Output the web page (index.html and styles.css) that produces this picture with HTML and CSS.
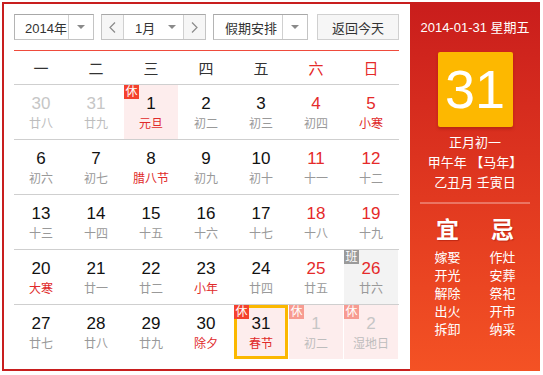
FILE: index.html
```html
<!DOCTYPE html>
<html lang="zh-CN">
<head>
<meta charset="utf-8">
<title>万年历</title>
<link rel="stylesheet" href="styles.css">
</head>
<body>
<div class="cal">
  <div class="main">
    <div class="toolbar">
      <div class="select year">
        <span class="sel-text">2014年</span>
        <span class="sel-arrow"><i class="tri"></i></span>
      </div>
      <div class="month-group">
        <span class="nav-btn"><svg width="7" height="11" viewBox="0 0 7 11"><polyline points="6,0.5 1,5.5 6,10.5" fill="none" stroke="#8a8a8a" stroke-width="1.2"/></svg></span>
        <span class="month"><span class="month-text">1月</span><i class="tri"></i></span>
        <span class="nav-btn"><svg width="7" height="11" viewBox="0 0 7 11"><polyline points="1,0.5 6,5.5 1,10.5" fill="none" stroke="#8a8a8a" stroke-width="1.2"/></svg></span>
      </div>
      <div class="select holiday">
        <span class="sel-text">假期安排</span>
        <span class="sel-arrow"><i class="tri"></i></span>
      </div>
      <div class="today-btn">返回今天</div>
    </div>

    <div class="weekdays">
      <span>一</span><span>二</span><span>三</span><span>四</span><span>五</span><span class="we">六</span><span class="we">日</span>
    </div>

    <div class="week">
      <div class="day other"><b>30</b><small>廿八</small></div>
      <div class="day other"><b>31</b><small>廿九</small></div>
      <div class="day rest"><em class="tag">休</em><b>1</b><small class="fest">元旦</small></div>
      <div class="day"><b>2</b><small>初二</small></div>
      <div class="day"><b>3</b><small>初三</small></div>
      <div class="day we"><b>4</b><small>初四</small></div>
      <div class="day we"><b>5</b><small class="fest">小寒</small></div>
    </div>
    <div class="week">
      <div class="day"><b>6</b><small>初六</small></div>
      <div class="day"><b>7</b><small>初七</small></div>
      <div class="day"><b>8</b><small class="fest">腊八节</small></div>
      <div class="day"><b>9</b><small>初九</small></div>
      <div class="day"><b>10</b><small>初十</small></div>
      <div class="day we"><b>11</b><small>十一</small></div>
      <div class="day we"><b>12</b><small>十二</small></div>
    </div>
    <div class="week">
      <div class="day"><b>13</b><small>十三</small></div>
      <div class="day"><b>14</b><small>十四</small></div>
      <div class="day"><b>15</b><small>十五</small></div>
      <div class="day"><b>16</b><small>十六</small></div>
      <div class="day"><b>17</b><small>十七</small></div>
      <div class="day we"><b>18</b><small>十八</small></div>
      <div class="day we"><b>19</b><small>十九</small></div>
    </div>
    <div class="week">
      <div class="day"><b>20</b><small class="fest">大寒</small></div>
      <div class="day"><b>21</b><small>廿一</small></div>
      <div class="day"><b>22</b><small>廿二</small></div>
      <div class="day"><b>23</b><small class="fest">小年</small></div>
      <div class="day"><b>24</b><small>廿四</small></div>
      <div class="day we"><b>25</b><small>廿五</small></div>
      <div class="day we work"><em class="tag gray">班</em><b>26</b><small>廿六</small></div>
    </div>
    <div class="week">
      <div class="day"><b>27</b><small>廿七</small></div>
      <div class="day"><b>28</b><small>廿八</small></div>
      <div class="day"><b>29</b><small>廿九</small></div>
      <div class="day"><b>30</b><small class="fest">除夕</small></div>
      <div class="day rest today"><em class="tag">休</em><b>31</b><small class="fest">春节</small></div>
      <div class="day rest other"><em class="tag faded">休</em><b>1</b><small>初二</small></div>
      <div class="day rest other"><em class="tag faded">休</em><b>2</b><small>湿地日</small></div>
    </div>
  </div>

  <div class="side">
    <div class="side-date">2014-01-31 星期五</div>
    <div class="big-day">31</div>
    <div class="lunar">
      <p>正月初一</p>
      <p>甲午年 【马年】</p>
      <p>乙丑月 壬寅日</p>
    </div>
    <div class="divider"></div>
    <div class="yiji">
      <div class="col">
        <h3>宜</h3>
        <p>嫁娶</p><p>开光</p><p>解除</p><p>出火</p><p>拆卸</p>
      </div>
      <div class="col">
        <h3>忌</h3>
        <p>作灶</p><p>安葬</p><p>祭祀</p><p>开市</p><p>纳采</p>
      </div>
    </div>
  </div>
</div>
</body>
</html>
```

FILE: styles.css
```css
* { box-sizing: border-box; }
body {
  margin: 0;
  background: #fff;
  font-family: "Liberation Sans", "Noto Sans CJK SC", sans-serif;
  color: #333;
}
p, h3 { margin: 0; }

.cal {
  display: flex;
  margin: 2px 0 0 2px;
  width: 538px;
  height: 369px;
}

.main {
  width: 408px;
  border: 2px solid #c81e1e;
  border-right: 0;
  padding: 10px 9px 10px 10px;
}

/* toolbar */
.toolbar {
  display: flex;
  height: 26px;
  font-size: 13px;
  color: #333;
}
.select {
  display: flex;
  border: 1px solid #c4c4c4;
  border-top-color: #a8a8a8;
  border-left-color: #b4b4b4;
  background: #fff;
}
.sel-text {
  display: flex;
  align-items: center;
  padding-left: 10px;
  border-right: 1px solid #d0d0d0;
}
.sel-arrow {
  display: flex;
  align-items: center;
  justify-content: center;
}
.tri {
  display: block;
  width: 0;
  height: 0;
  border-left: 4px solid transparent;
  border-right: 4px solid transparent;
  border-top: 4px solid #8a8a8a;
}
.year { width: 80px; }
.year .sel-text { width: 55px; }
.year .sel-arrow { width: 24px; }

.month-group {
  display: flex;
  margin-left: 7px;
  width: 105px;
  border: 1px solid #c4c4c4;
  border-top-color: #a8a8a8;
}
.nav-btn {
  width: 22px;
  display: flex;
  align-items: center;
  justify-content: center;
  background: #f6f6f6;
}
.nav-btn:first-child { border-right: 1px solid #d0d0d0; }
.nav-btn:last-child { border-left: 1px solid #d0d0d0; }
.month {
  flex: 1;
  display: flex;
  align-items: center;
  padding-left: 11px;
  background: #fff;
}
.month-text { width: 33px; }

.holiday { margin-left: 7px; width: 95px; }
.holiday .sel-text { width: 70px; padding-left: 11px; }
.holiday .sel-arrow { width: 24px; }

.today-btn {
  margin-left: 9px;
  width: 82px;
  display: flex;
  align-items: center;
  justify-content: center;
  border: 1px solid #d0d0d0;
  background: #f6f6f6;
}

/* weekday header */
.weekdays {
  margin-top: 10px;
  border-top: 1px solid #ef4b3c;
  height: 34px;
  display: grid;
  grid-template-columns: repeat(7, 54px);
  column-gap: 1px;
  align-items: center;
  font-size: 15px;
  color: #333;
  width: 385px;
}
.weekdays span { text-align: center; }
.weekdays .we { color: #e52a2a; }

/* weeks */
.week {
  display: grid;
  grid-template-columns: repeat(7, 54px);
  column-gap: 1px;
  border-top: 1px solid #cfcfcf;
  width: 385px;
}
.day {
  position: relative;
  height: 54px;
  display: flex;
  flex-direction: column;
  align-items: center;
  padding-top: 9px;
}
.day b {
  font-weight: normal;
  font-size: 17px;
  line-height: 20px;
  color: #111;
}
.day small {
  font-size: 12px;
  line-height: 16px;
  margin-top: 2px;
  color: #999;
}
.day.we b { color: #e52a2a; }
.day small.fest { color: #e02a2a; }
.day.other b { color: #c6c6c6; }
.day.other small { color: #bdbdbd; }
.day.rest { background: #fdeded; }
.day.work { background: #f3f3f3; }
.day.today {
  border: 3px solid #fbb800;
  padding-top: 6px;
}
.day.today b { color: #111; }
.tag {
  position: absolute;
  left: 0;
  top: 0;
  width: 15px;
  height: 14px;
  font-style: normal;
  font-size: 12px;
  line-height: 14px;
  text-align: center;
  color: #fff;
  background: #f4412d;
}
.today .tag { left: -3px; top: -3px; }
.tag.gray { background: #9a9a9a; }
.tag.faded { background: #f79b91; }

/* side panel */
.side {
  width: 130px;
  background: linear-gradient(to bottom, #c91d1c 0%, #e23a20 55%, #f45224 100%);
  color: #fff;
  display: flex;
  flex-direction: column;
  align-items: center;
  padding-top: 16px;
}
.side-date {
  font-size: 13px;
  line-height: 20px;
}
.big-day {
  margin-top: 14px;
  width: 75px;
  height: 75px;
  background: #fdb800;
  border-radius: 2px;
  box-shadow: 0 2px 3px rgba(120, 20, 0, 0.35);
  font-size: 54px;
  line-height: 75px;
  text-align: center;
  color: #fff;
}
.lunar {
  margin-top: 6px;
  text-align: center;
  font-size: 13px;
  line-height: 20px;
}
.divider {
  margin-top: 9px;
  width: 110px;
  height: 2px;
  background: rgba(255, 255, 255, 0.3);
}
.yiji {
  margin-top: 12px;
  width: 110px;
  display: flex;
}
.yiji .col {
  flex: 1;
  text-align: center;
}
.yiji h3 {
  font-size: 23px;
  line-height: 28px;
  font-weight: bold;
  text-shadow: 1px 1px 1px rgba(120, 0, 0, 0.35);
  margin-bottom: 5px;
}
.yiji p {
  font-size: 13px;
  line-height: 18px;
}
```
